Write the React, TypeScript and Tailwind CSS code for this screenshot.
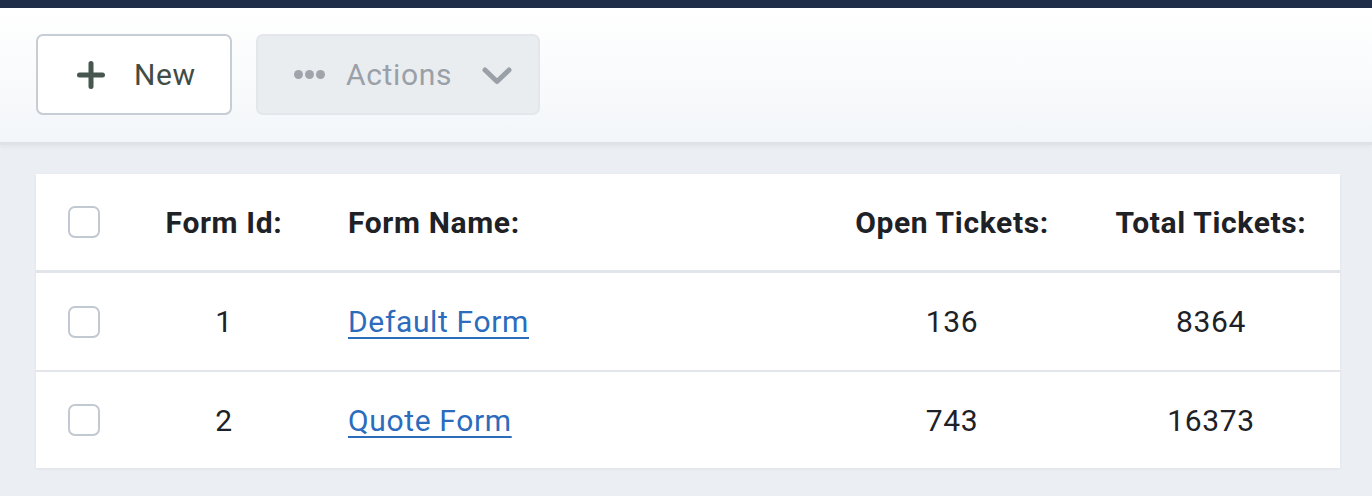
const FORMS = [
  { id: 1, name: 'Default Form', open: 136, total: 8364 },
  { id: 2, name: 'Quote Form', open: 743, total: 16373 },
];

const COLS = 'grid grid-cols-[96px_184px_1fr_260px_258px] items-center';

function Checkbox() {
  return <span className="block w-[32px] h-[32px] rounded-[7px] border-2 border-[#c3c9d1] bg-white" />;
}

export default function App() {
  return (
    <div className="min-h-[496px] bg-[#ebeef2] font-['Roboto',sans-serif] tracking-[0.04em]">
      <div className="h-[8px] bg-[#1f2d48]" />

      <div className="h-[137px] bg-gradient-to-b from-white to-[#f3f6f9] border-b-[3px] border-[#dfe3e8] shadow-[0_2px_4px_rgba(0,0,0,0.04)] pl-[36px] pt-[26px] flex items-start gap-[24px]">
        <button className="w-[196px] h-[81px] rounded-[7px] border-2 border-[#c6cdd4] bg-white flex items-center pl-[38px] text-[#3f4d46]">
          <svg width="30" height="30" viewBox="0 0 30 30" className="text-[#47574f]">
            <path d="M15 3.5V26.5M3.5 15H26.5" stroke="currentColor" strokeWidth="5" strokeLinecap="round" />
          </svg>
          <span className="text-[30px] ml-[28px]">New</span>
        </button>
        <button className="w-[284px] h-[81px] rounded-[7px] border-2 border-[#e3e6ea] bg-[#eaedf0] flex items-center pl-[36px] text-[#9aa0a8]">
          <span className="flex gap-[2px]">
            <span className="w-[9px] h-[9px] rounded-full bg-[#a0a5ab]" />
            <span className="w-[9px] h-[9px] rounded-full bg-[#a0a5ab]" />
            <span className="w-[9px] h-[9px] rounded-full bg-[#a0a5ab]" />
          </span>
          <span className="text-[30px] ml-[21px]">Actions</span>
          <svg width="32" height="22" viewBox="0 0 32 22" className="ml-[29px] mt-[2px] text-[#9aa0a7]">
            <path d="M4 5L16 16.5L28 5" fill="none" stroke="currentColor" strokeWidth="5" strokeLinecap="round" strokeLinejoin="round" />
          </svg>
        </button>
      </div>

      <div className="pl-[36px] pr-[32px] pt-[29px] pb-[28px]">
        <div className="bg-white shadow-[0_1px_3px_rgba(0,0,0,0.06)] text-[30px] text-[#1e2125]">
          <div className={`${COLS} h-[99px] border-b-[3px] border-[#e1e5e9] font-bold`}>
            <div className="pl-[32px]"><Checkbox /></div>
            <div className="text-center">Form Id:</div>
            <div className="pl-[32px]">Form Name:</div>
            <div className="text-center">Open Tickets:</div>
            <div className="text-center">Total Tickets:</div>
          </div>
          {FORMS.map((f, i) => (
            <div
              key={f.id}
              className={`${COLS} ${i === 0 ? 'h-[99px] border-b-2 border-[#e3e7eb]' : 'h-[96px]'}`}
            >
              <div className="pl-[32px]"><Checkbox /></div>
              <div className="text-center">{f.id}</div>
              <div className="pl-[32px]">
                <a href="#" className="text-[#2c6cbd] underline underline-offset-[5px] decoration-2">{f.name}</a>
              </div>
              <div className="text-center">{f.open}</div>
              <div className="text-center">{f.total}</div>
            </div>
          ))}
        </div>
      </div>
    </div>
  );
}
